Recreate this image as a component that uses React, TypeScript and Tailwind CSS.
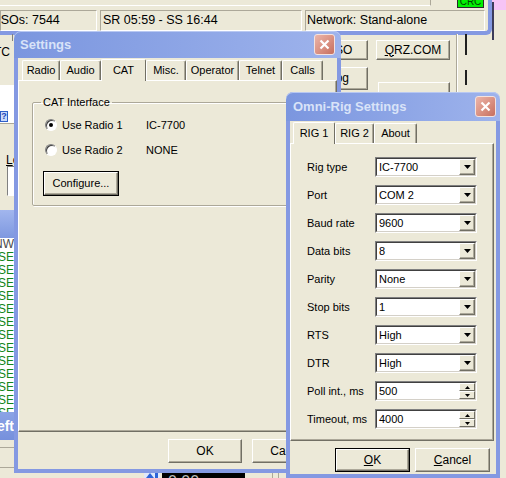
import React from "react";

const FONT = "font-['Liberation_Sans',Arial,sans-serif]";

type Kids = { children?: React.ReactNode; className?: string };

const CloseX = () => (
  <div className="w-[21px] h-[21px] rounded-[3px] border border-[#f4e2de] bg-gradient-to-br from-[#ebb5aa] via-[#db9384] to-[#c66f5f] flex items-center justify-center">
    <svg width="11" height="11" viewBox="0 0 11 11">
      <path d="M1.5 1.5L9.5 9.5M9.5 1.5L1.5 9.5" stroke="#ffffff" strokeWidth="2.2" />
    </svg>
  </div>
);

const TitleBar = ({ title, className = "" }: { title: string; className?: string }) => (
  <div
    className={`flex items-center justify-between rounded-t-[7px] bg-gradient-to-r from-[#7b96df] to-[#9eb3ec] shadow-[inset_0_1px_0_#b8c8f2] ${className}`}
  >
    <span className="font-bold text-[13px] text-[#d9e3f8]">{title}</span>
    <CloseX />
  </div>
);

// classic raised button, def = default button with black frame
const Btn = ({ children, className = "", def = false }: Kids & { def?: boolean }) => (
  <div className={`${def ? "border border-black" : ""} ${className}`}>
    <div className="h-full w-full bg-[#ece9d8] border border-t-white border-l-white border-r-[#716f64] border-b-[#716f64] shadow-[inset_-1px_-1px_0_#aca899] flex items-center justify-center whitespace-nowrap">
      {children}
    </div>
  </div>
);

const Sunken = ({ children, className = "" }: Kids) => (
  <div className={`border border-t-[#aca899] border-l-[#aca899] border-r-white border-b-white ${className}`}>
    {children}
  </div>
);

const Tab = ({ label, w, sel = false }: { label: string; w: string; sel?: boolean }) =>
  sel ? (
    <div className={`${w} h-[22px] relative z-10 -mb-px bg-[#ece9d8] border border-b-0 border-t-white border-l-white border-r-[#716f64] rounded-t-[2px] flex items-start justify-center pt-[4px]`}>
      {label}
    </div>
  ) : (
    <div className={`${w} h-[20px] border border-b-0 border-t-white border-l-white border-r-[#716f64] rounded-t-[2px] shadow-[inset_-1px_0_0_#aca899] flex items-center justify-center`}>
      {label}
    </div>
  );

const panel =
  "border border-t-white border-l-white border-r-[#716f64] border-b-[#716f64] shadow-[inset_-1px_-1px_0_#aca899]";

const Radio = ({ on = false }: { on?: boolean }) => (
  <div className="w-[12px] h-[12px] rounded-full bg-white border border-t-[#808080] border-l-[#808080] border-r-white border-b-white shadow-[inset_1px_1px_0_#404040] flex items-center justify-center">
    {on && <div className="w-[4px] h-[4px] rounded-full bg-black" />}
  </div>
);

const DownArrow = () => (
  <svg width="7" height="4" viewBox="0 0 7 4">
    <polygon points="0,0 7,0 3.5,4" fill="#000" />
  </svg>
);

const Combo = ({ value, spin = false }: { value: string; spin?: boolean }) => (
  <div className="w-[102px] h-[20px] bg-white border border-t-[#808080] border-l-[#808080] border-r-white border-b-white">
    <div className="h-full flex items-center border border-t-[#404040] border-l-[#404040] border-r-[#d4d0c8] border-b-[#d4d0c8]">
      <span className="flex-1 pl-[2px]">{value}</span>
      {spin ? (
        <div className="w-[16px] h-full flex flex-col">
          <div className="flex-1 bg-[#ece9d8] border border-t-white border-l-white border-r-[#716f64] border-b-[#716f64] flex items-center justify-center">
            <svg width="5" height="3" viewBox="0 0 5 3">
              <polygon points="0,3 5,3 2.5,0" fill="#000" />
            </svg>
          </div>
          <div className="flex-1 bg-[#ece9d8] border border-t-white border-l-white border-r-[#716f64] border-b-[#716f64] flex items-center justify-center">
            <svg width="5" height="3" viewBox="0 0 5 3">
              <polygon points="0,0 5,0 2.5,3" fill="#000" />
            </svg>
          </div>
        </div>
      ) : (
        <div className="w-[16px] h-full bg-[#ece9d8] border border-t-white border-l-white border-r-[#716f64] border-b-[#716f64] shadow-[inset_-1px_-1px_0_#aca899] flex items-center justify-center">
          <DownArrow />
        </div>
      )}
    </div>
  </div>
);

const rigRows: [string, string, boolean][] = [
  ["Rig type", "IC-7700", false],
  ["Port", "COM 2", false],
  ["Baud rate", "9600", false],
  ["Data bits", "8", false],
  ["Parity", "None", false],
  ["Stop bits", "1", false],
  ["RTS", "High", false],
  ["DTR", "High", false],
  ["Poll int., ms", "500", true],
  ["Timeout, ms", "4000", true],
];

const logRows = ["WNW", ...Array(13).fill("SSE")];

export default function App() {
  return (
    <div className={`relative w-[506px] h-[478px] overflow-hidden bg-[#ece9d8] text-[11px] leading-[13px] text-black ${FONT}`}>
      {/* main logger window (bottom edge) */}
      <div className="absolute left-0 top-0 w-[492px] h-[35px] bg-[#ece9d8] border-r-4 border-b-4 border-[#8499e2] rounded-br-[6px] flex flex-col">
        <div className="flex h-[10px] items-start">
          <div className="w-[431px] h-[6px] border-b border-r border-b-white border-r-[#aca899]" />
          <div className="ml-[26px] w-[27px] h-[8px] bg-[#00f000] border border-t-0 border-[#2a2a2a] overflow-hidden flex items-end justify-center">
            <span className="text-[10px] leading-[10px] text-[#004000]">CRC</span>
          </div>
        </div>
        <div className="flex gap-[3px] h-[21px] text-[12.5px] leading-[19px] whitespace-nowrap">
          <Sunken className="w-[97px] overflow-hidden pl-[2px]">
            <span className="-ml-[12px]">QSOs: 7544</span>
          </Sunken>
          <Sunken className="w-[202px] overflow-hidden pl-[2px]">SR 05:59 - SS 16:44</Sunken>
          <Sunken className="w-[180px] overflow-hidden pl-[1px]">Network: Stand-alone</Sunken>
        </div>
      </div>
      <div className="absolute left-[492px] top-0 w-[14px] h-[10px] bg-[#f6c4f6]" />
      <div className="absolute left-[492px] top-[2px] w-[2px] h-[38px] bg-[#3c3c5a]" />

      {/* log window behind: left strip */}
      <div className="absolute left-[-20px] top-[46px] w-[30px] text-right text-[12px]">UTC</div>
      <div className="absolute left-[12px] top-[34px] w-px h-[7px] bg-[#808080]" />
      <div className="absolute left-0 top-[85px] w-[14px] h-[39px] bg-white border-b border-[#aca899]">
        <div className="absolute left-0 bottom-[1px] w-[8px] h-[11px] border border-[#2f5fc8] bg-[#c9d9f9] text-[9px] leading-[9px] text-[#1a46b8] font-bold flex items-center justify-center">
          ?
        </div>
      </div>
      <div className="absolute left-[6px] top-[154px] text-[12px]">
        <span className="underline">L</span>og
      </div>
      <div className="absolute left-[7px] top-[166px] w-[12px] h-[30px] bg-white border border-t-[#808080] border-l-[#808080] border-r-white border-b-white" />
      <div className="absolute left-[-26px] top-[210px] w-[40px] h-[230px] flex flex-col">
        <div className="h-[28px] bg-gradient-to-b from-[#a2b6ee] to-[#7e98e0]" />
        <div className="h-[174px] bg-white overflow-hidden text-right text-[12px] leading-[13px]">
          {logRows.map((r, i) => (
            <div key={i} className={i === 0 ? "text-[#4a4a4a]" : "text-[#12851a]"}>
              {r}
            </div>
          ))}
        </div>
        <div className="h-[28px] bg-gradient-to-b from-[#8ba3e6] to-[#7690dc] flex items-center justify-end">
          <span className="font-bold text-[14px] text-white">Left</span>
        </div>
      </div>
      <div className="absolute left-0 top-[447px] w-[14px] h-px bg-[#aca899]" />
      <div className="absolute left-0 top-[467px] w-[14px] h-px bg-[#aca899]" />

      {/* log window behind: right buttons */}
      <Btn className="absolute left-[310px] top-[40px] w-[58px] h-[20px] text-[12px]">QSO</Btn>
      <Btn className="absolute left-[310px] top-[67px] w-[58px] h-[23px] text-[12px]">Log</Btn>
      <Btn className="absolute left-[376px] top-[40px] w-[74px] h-[20px] text-[12px]">
        <span className="underline">Q</span>RZ.COM
      </Btn>
      <Btn className="absolute left-[378px] top-[82px] w-[72px] h-[20px]" />
      <div className="absolute left-[456px] top-[34px] w-px h-[59px] bg-[#aca899]" />
      <div className="absolute left-[457px] top-[34px] w-px h-[59px] bg-white" />
      <div className="absolute left-[465px] top-[34px] w-[2px] h-[21px] bg-[#202020]" />
      <div className="absolute left-[465px] top-[70px] w-[2px] h-[15px] bg-[#202020]" />

      {/* bottom strip */}
      <svg className="absolute left-[144px] top-[471px]" width="16" height="8" viewBox="0 0 16 8">
        <rect x="0" y="0" width="16" height="8" fill="#dfe8fb" />
        <polygon points="2,7 6,2 10,7" fill="#2c62d8" />
        <rect x="11" y="2" width="3" height="6" fill="#2c62d8" />
      </svg>
      <div className="absolute left-[162px] top-[472px] w-[83px] h-[20px] bg-black pl-[6px] text-[16px] leading-[20px] text-[#bdbdbd]">0:00</div>
      <div className="absolute left-[272px] top-[472px] w-px h-[6px] bg-[#aca899]" />
      <div className="absolute left-[278px] top-[472px] w-px h-[6px] bg-[#aca899]" />

      {/* Settings dialog */}
      <div className="absolute left-[14px] top-[31px] w-[327px] h-[442px] flex flex-col">
        <TitleBar title="Settings" className="h-[27px] pl-[6px] pr-[6px]" />
        <div className="flex-1 flex flex-col bg-[#ece9d8] border-x-4 border-b-4 border-[#8499e2]">
          <div className="flex items-end h-[22px] pl-[4px]">
            <Tab label="Radio" w="w-[38px]" />
            <Tab label="Audio" w="w-[41px]" />
            <Tab label="CAT" w="w-[45px]" sel />
            <Tab label="Misc." w="w-[40px]" />
            <Tab label="Operator" w="w-[53px]" />
            <Tab label="Telnet" w="w-[43px]" />
            <Tab label="Calls" w="w-[41px]" />
          </div>
          <div className={`h-[352px] ${panel} pt-[14px] pl-[13px] pr-[14px]`}>
            <fieldset className="border border-[#aca899] rounded-[2px] shadow-[inset_1px_1px_0_#ffffff,1px_1px_0_#ffffff]">
              <legend className="ml-[8px] px-[2px] leading-[14px]">CAT Interface</legend>
              <div className="pl-[12px] pb-[9px]">
                <div className="mt-[8px] h-[16px] flex items-center">
                  <Radio on />
                  <span className="ml-[5px] w-[84px]">Use Radio 1</span>
                  <span>IC-7700</span>
                </div>
                <div className="mt-[9px] h-[16px] flex items-center">
                  <Radio />
                  <span className="ml-[5px] w-[84px]">Use Radio 2</span>
                  <span>NONE</span>
                </div>
                <Btn def className="mt-[13px] -ml-[2px] w-[76px] h-[25px]">
                  Configure...
                </Btn>
              </div>
            </fieldset>
          </div>
          <div className="mt-[7px] h-[24px] flex justify-end gap-[10px] pr-[11px]">
            <Btn className="w-[74px] h-full text-[12px]">OK</Btn>
            <Btn className="w-[74px] h-full text-[12px]">Cancel</Btn>
          </div>
        </div>
      </div>

      {/* Omni-Rig dialog */}
      <div className="absolute left-[286px] top-[92px] w-[214px] h-[386px] flex flex-col">
        <TitleBar title="Omni-Rig Settings" className="h-[29px] pl-[7px] pr-[4px]" />
        <div className="flex-1 flex flex-col bg-[#ece9d8] border-x-4 border-b-4 border-[#8499e2]">
          <div className="flex items-end h-[22px] pl-[3px]">
            <Tab label="RIG 1" w="w-[42px]" sel />
            <Tab label="RIG 2" w="w-[39px]" />
            <Tab label="About" w="w-[43px]" />
          </div>
          <div className={`h-[298px] mr-[2px] ${panel} pt-[13px] pl-[16px]`}>
            <div className="grid grid-cols-[68px_102px] gap-y-[8px] items-center">
              {rigRows.map(([label, value, spin]) => (
                <React.Fragment key={label}>
                  <span>{label}</span>
                  <Combo value={value} spin={spin} />
                </React.Fragment>
              ))}
            </div>
          </div>
          <div className="mt-[7px] h-[24px] flex justify-end gap-[5px] pr-[6px]">
            <Btn def className="w-[75px] h-full text-[12px]">
              <span className="underline">O</span>K
            </Btn>
            <Btn className="w-[75px] h-full text-[12px]">
              <span className="underline">C</span>ancel
            </Btn>
          </div>
        </div>
      </div>
    </div>
  );
}
